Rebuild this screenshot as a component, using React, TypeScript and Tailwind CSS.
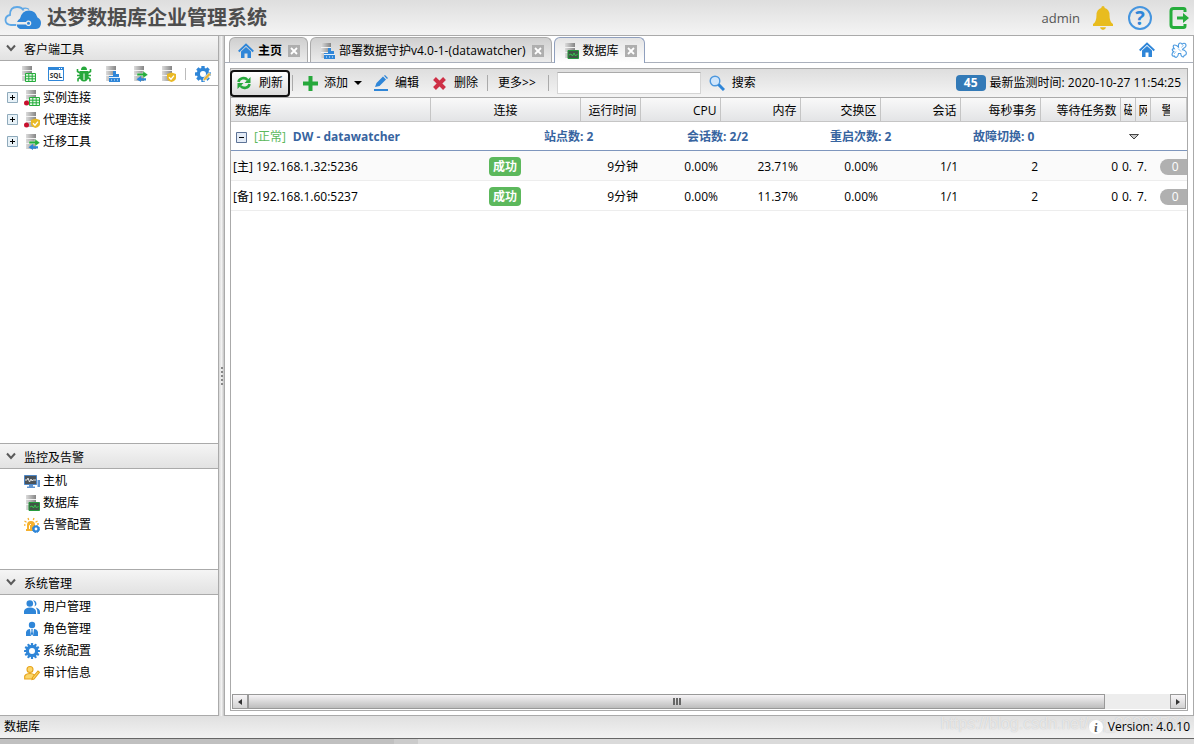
import type { ReactNode } from "react";

type Kind = "table" | "agent" | "deploy" | "transfer" | "monitor";

function ServerIcon({ kind, dot = false }: { kind: Kind; dot?: boolean }) {
  return (
    <svg width="16" height="16" viewBox="0 0 16 16" className="shrink-0" aria-hidden="true">
      <defs>
        <linearGradient id="srv" x1="0" x2="1">
          <stop offset="0" stopColor="#dcdcdc" />
          <stop offset="1" stopColor="#858585" />
        </linearGradient>
      </defs>
      <path d="M2 0h10v4H2zM2 5h10v4H2zM2 10h10v5H2z" fill="url(#srv)" />
      <path d="M2 4.500h10M2 9.500h10" stroke="#f2f2f2" />
      {kind === "table" && (
        <>
          <path d="M5.500 7.500h10v8h-10z" fill="#e6f8e8" stroke="#26ad3c" />
          <path d="M6 10.200h9.500M6 12.800h9.500M8.800 7.500v8M12.200 7.500v8" stroke="#26ad3c" />
        </>
      )}
      {kind === "agent" && (
        <>
          <path d="M11.500 6.500 16 8v4q0 2.500-4.500 4Q7 14.500 7 12V8z" fill="#e9b925" />
          <path d="m9 11.200 2 2 3-3.500" fill="none" stroke="#fff" strokeWidth="1.300" />
        </>
      )}
      {kind === "deploy" && (
        <>
          <path d="M9 5h3v3h3v3h1v5H5v-6h4z" fill="#2f86d8" />
          <path d="M5 11.500h11M7 14h1M10 14h1M13 14h1" stroke="#e5f1fc" />
        </>
      )}
      {kind === "transfer" && (
        <>
          <path d="M5 7.200h6V5l5 3.700-5 3.600v-2.500H5z" fill="#26ad3c" stroke="#fff" strokeWidth=".4" />
          <path d="M14 12.200H9V10l-4.500 3.300L9 16v-1.500h5z" fill="#2f86d8" />
        </>
      )}
      {kind === "monitor" && (
        <>
          <path d="M5 7.500h10.500v8H5z" fill="#3f5745" stroke="#269b3d" />
          <path d="m6 12 2-1 1.500 2 1.500-3 1.500 3 2-2" fill="none" stroke="#37c74f" />
        </>
      )}
      {dot && <circle cx="2.500" cy="13" r="2.500" fill="#c8102e" />}
    </svg>
  );
}

const teeth = [0, 45, 90, 135, 180, 225, 270, 315];
const fineTeeth = [0, 30, 60, 90, 120, 150, 180, 210, 240, 270, 300, 330];

function GearIcon({ pencil = false, fine = false }: { pencil?: boolean; fine?: boolean }) {
  return (
    <svg width="16" height="16" viewBox="0 0 16 16" className="shrink-0" aria-hidden="true">
      <g fill="#2f86d8">
        {(fine ? fineTeeth : teeth).map((a) => (
          <rect key={a} x={fine ? 6.9 : 6.3} y="0" width={fine ? 2.2 : 3.4} height="4" rx=".5" transform={`rotate(${a} 8 8)`} />
        ))}
      </g>
      <circle cx="8" cy="8" r="4.600" fill="none" stroke="#2f86d8" strokeWidth="3.200" />
      {pencil && <path d="m8 15 .8-3L14 6.500l2 2-5.200 5.500z" fill="#eab53a" stroke="#fff" strokeWidth=".6" />}
    </svg>
  );
}

function HomeIcon() {
  return (
    <svg width="16" height="16" viewBox="0 0 16 16" className="shrink-0" aria-hidden="true">
      <path d="m.7 8.500 7.300-7 7.300 7" fill="none" stroke="#2f86d8" strokeWidth="1.800" />
      <path d="M3 8.500 8 4l5 4.500V15H9.500v-4.500h-3V15H3z" fill="#2f86d8" />
    </svg>
  );
}

function SqlIcon() {
  return (
    <svg width="16" height="16" viewBox="0 0 16 16" aria-hidden="true">
      <path d="M.5 1.500h15v13H.5z" fill="#fff" stroke="#2f86d8" />
      <path d="M0 1h16v3H0z" fill="#2f86d8" />
      <path d="M11 2.500h1M13 2.500h1" stroke="#fff" />
      <text x="8" y="11.800" textAnchor="middle" fontSize="6.500" fontWeight="700" fontFamily="Open Sans" fill="#333">SQL</text>
    </svg>
  );
}

function BugIcon() {
  return (
    <svg width="16" height="16" viewBox="0 0 16 16" aria-hidden="true">
      <path d="M5 4a3 3.500 0 0 1 6 0zM3.500 5h9v6q-1 4.500-4.500 4.500T3.500 11z" fill="#26a83b" />
      <path d="M1.500 3v2.500L4 7M14.500 3v2.500L12 7M1 9.500h3M15 9.500h-3M4 11.500 2 13v2.500M12 11.500l2 1.500v2.500" fill="none" stroke="#26a83b" strokeWidth="1.600" />
      <path d="M8 7.500V14" stroke="#fff" />
    </svg>
  );
}

function HostIcon() {
  return (
    <svg width="16" height="16" viewBox="0 0 16 16" className="shrink-0" aria-hidden="true">
      <path d="M.5 2.500h12v9H.5z" fill="#4b5258" stroke="#4d86c6" />
      <path d="M1 7h2l1-2 1.500 4 1.500-3 1 2 1-1h3" fill="none" stroke="#e4e4e4" />
      <path d="M5 12h4v1.500h2V15H3v-1.500h2zM13.500 7H16v7h-2.500z" fill="#5d92cf" />
    </svg>
  );
}

function AlarmIcon() {
  return (
    <svg width="16" height="16" viewBox="0 0 16 16" className="shrink-0" aria-hidden="true">
      <path d="M3 12V8a4 4 0 0 1 8 0v4h1v2H2v-2z" fill="#f5b12e" />
      <path d="M5.500 12V8.500L7 7" fill="none" stroke="#fff" />
      <path d="m4 1 .7 2M10 1l-.7 2M.500 4l2 1.200M13.500 4l-2 1.200M0 8h1.500M13 7h2" stroke="#f5b12e" strokeWidth="1.300" />
      <circle cx="12" cy="12" r="2.500" fill="#fff" stroke="#2f86d8" strokeWidth="2.200" />
      <circle cx="12" cy="12" r="3.500" fill="none" stroke="#2f86d8" strokeDasharray="1.600 1.150" />
    </svg>
  );
}

function UsersIcon() {
  return (
    <svg width="16" height="16" viewBox="0 0 16 16" className="shrink-0" aria-hidden="true" fill="#2f86d8">
      <circle cx="5.800" cy="4.500" r="3.300" />
      <path d="M0 15v-3q1-3.500 6-3.500t6 3.500v3zM9 1.200a3.300 3.300 0 0 1 1.500 6.300Q12 4 9 1.200M11.800 8.500Q16 9.500 16 13v2h-2.500q.5-4-1.700-6.500" />
    </svg>
  );
}

function RoleIcon() {
  return (
    <svg width="16" height="16" viewBox="0 0 16 16" className="shrink-0" aria-hidden="true" fill="#2f86d8">
      <circle cx="8" cy="4" r="3.200" />
      <path d="M2 15v-4q1-3 4-3l1 7zM14 15v-4q-1-3-4-3l-1 7zM7 8.200h2l-.5 1.500.6 3.300L8 14.800 6.900 13l.6-3.300z" />
    </svg>
  );
}

function AuditIcon() {
  return (
    <svg width="16" height="16" viewBox="0 0 16 16" className="shrink-0" aria-hidden="true" fill="#fbd66a" stroke="#e7a41c" strokeWidth="1.100">
      <circle cx="6" cy="4.500" r="3" />
      <path d="M.7 14v-3Q2 8.500 6 8.500q3 0 4.500 1.500L9 14z" />
      <path d="m8 14.500.5-2L14 6l1.500 1.200L10 14z" />
    </svg>
  );
}

function Logo() {
  return (
    <svg width="38" height="26" viewBox="0 0 38 26" aria-hidden="true">
      <path d="M15 23.500q-2-1-2.500-4h9.500a2.800 2.800 0 1 0 0-2.500h-9Q14 14.500 16 13.500 18 5.500 25 5.500q6.500 0 8.500 7Q37 14 37 18q0 5.500-5 6H18q-2 0-3-.5" fill="#2f86d8" />
      <circle cx="24.500" cy="18.200" r="1.500" fill="#2f86d8" />
      <path d="M12 20H7q-5.500-.5-5.500-5 0-4 4.500-5 0-8 7-8 5 0 6.500 3.500" fill="none" stroke="#5fa8e6" strokeWidth="1.800" />
      <path d="M19 3.500q4-1 6 1" fill="none" stroke="#5fa8e6" strokeWidth="1.300" />
    </svg>
  );
}

function Chevron() {
  return (
    <svg width="10" height="8" viewBox="0 0 10 8" className="mb-1" aria-hidden="true">
      <path d="m1 1.500 4 4.500 4-4.500" fill="none" stroke="#5a5a5a" strokeWidth="2" />
    </svg>
  );
}

function ToggleBox({ open = false }: { open?: boolean }) {
  return (
    <button aria-label={open ? "收起" : "展开"} className="shrink-0">
      <svg width="11" height="11" viewBox="0 0 11 11" className="block">
        <path d="M.5.5h10v10H.5z" fill={open ? "#e3ebf6" : "#e8f2f8"} stroke={open ? "#5d7396" : "#8faabb"} />
        <path d={open ? "M3 5.500h5" : "M3 5.500h5M5.500 3v5"} stroke="#000" />
      </svg>
    </button>
  );
}

function SectionHeader({ title }: { title: string }) {
  return (
    <button className="flex h-[26px] w-full shrink-0 items-center gap-2 border-y border-[#aaa] bg-linear-to-b from-[#f5f5f5] to-[#e2e2e2] px-[6px] pt-1">
      <Chevron />
      <span>{title}</span>
    </button>
  );
}

function NavItem({ icon, label }: { icon: ReactNode; label: string }) {
  return (
    <li>
      <a href="#" className="flex h-[22px] items-center gap-[3px] pl-6">
        {icon}
        <span>{label}</span>
      </a>
    </li>
  );
}

function TreeItem({ icon, label }: { icon: ReactNode; label: string }) {
  return (
    <li className="flex h-[22px] items-center gap-[6px] pl-[7px]">
      <ToggleBox />
      <a href="#" className="flex items-center gap-[3px] pt-[2px]">
        {icon}
        <span>{label}</span>
      </a>
    </li>
  );
}

function Tab({ icon, label, bold = false, active = false }: { icon: ReactNode; label: string; bold?: boolean; active?: boolean }) {
  return (
    <div
      className={`flex items-center gap-1 rounded-t-md border border-b-0 pt-px pr-[7px] pl-2 ${
        active ? "-mb-px h-[26px] border-[#8f9fbd] bg-linear-to-b from-[#e4e4e4] to-white" : "h-[25px] border-[#aaa] bg-linear-to-b from-[#cfcfcf] to-[#ececec]"
      }`}
    >
      <button role="tab" aria-selected={active} className={`flex items-center gap-1 whitespace-nowrap ${bold ? "font-bold" : ""}`}>
        {icon}
        <span>{label}</span>
      </button>
      <button aria-label="关闭" className="ml-[2px] grid size-3 place-items-center bg-[#aeaeae]">
        <svg width="8" height="8" viewBox="0 0 8 8">
          <path d="m1 1 6 6M7 1 1 7" stroke="#fff" strokeWidth="1.800" />
        </svg>
      </button>
    </div>
  );
}

function Separator() {
  return <span className="h-4 w-px shrink-0 bg-[#aaa]" />;
}

const columns = [
  { title: "数据库", width: "w-[199px]", align: "text-left" },
  { title: "连接", width: "w-[150px]", align: "text-center" },
  { title: "运行时间", width: "w-[60px]", align: "text-right" },
  { title: "CPU", width: "w-20", align: "text-right" },
  { title: "内存", width: "w-20", align: "text-right" },
  { title: "交换区", width: "w-20", align: "text-right" },
  { title: "会话", width: "w-20", align: "text-right" },
  { title: "每秒事务", width: "w-20", align: "text-right" },
  { title: "等待任务数", width: "w-20", align: "text-right" },
  { title: "磁", width: "w-[15px]", align: "text-left" },
  { title: "网", width: "w-[15px]", align: "text-left" },
  { title: "警", width: "w-auto", align: "text-left" },
];

const rows = [
  { name: "[主] 192.168.1.32:5236", values: ["9分钟", "0.00%", "23.71%", "0.00%", "1/1", "2", "0"] },
  { name: "[备] 192.168.1.60:5237", values: ["9分钟", "0.00%", "11.37%", "0.00%", "1/1", "2", "0"] },
];

const summary = ["站点数: 2", "会话数: 2/2", "重启次数: 2", "故障切换: 0"];

function Grid() {
  return (
    <table className="w-full table-fixed border-collapse">
      <colgroup>
        {columns.map((c) => <col key={c.title} className={c.width} />)}
      </colgroup>
      <thead>
        <tr className="h-[23px] bg-linear-to-b from-[#f9f9f9] to-[#e3e4e6]">
          {columns.map((c, i) => (
            <th key={c.title} className={`overflow-hidden border-r border-b border-[#c5c5c5] pt-[3px] font-normal whitespace-nowrap ${i > 8 ? "px-[3px]" : "pr-[3px] pl-1"} ${c.align}`}>
              {i > 8 ? <span className={`block w-2 overflow-hidden ${i === 11 ? "ml-2" : ""}`}>{c.title}</span> : c.title}
            </th>
          ))}
        </tr>
      </thead>
      <tbody>
        <tr className="h-[29px] border-b border-[#7e96bd] font-bold text-[#3764a0]">
          <td colSpan={12}>
            <div className="flex items-center pt-[3px] pl-[5px]">
              <div className="flex w-[308px] shrink-0 items-center gap-[7px]">
                <ToggleBox open />
                <span className="font-normal text-[#5cb85c]">[正常]</span>
                <span>DW - datawatcher</span>
              </div>
              {summary.map((s) => <span key={s} className="w-[143px] shrink-0">{s}</span>)}
              <button aria-label="更多" className="ml-3">
                <svg width="12" height="8" viewBox="0 0 12 8" className="block">
                  <path d="M1.500 1.500h9L6 6z" fill="#c8c8c8" stroke="#444" />
                </svg>
              </button>
            </div>
          </td>
        </tr>
        {rows.map((r) => (
          <tr key={r.name} className="h-[30px] border-b border-[#ededed] odd:bg-white even:bg-[#fafafa] [&>td]:pt-[3px]">
            <td className="pl-[2px]">{r.name}</td>
            <td className="text-center">
              <span className="inline-block rounded-[4px] bg-[#5cb85c] px-1 leading-[19px] font-bold text-white">成功</span>
            </td>
            {r.values.map((v, i) => <td key={i} className="pr-[2px] text-right">{v}</td>)}
            <td className="overflow-hidden pl-[2px] whitespace-nowrap">0.</td>
            <td className="overflow-hidden pl-[2px] whitespace-nowrap">7.</td>
            <td className="overflow-hidden pl-[10px]">
              <span className="flex h-4 items-center justify-center rounded-l-full bg-[#b0b0b0] pl-1 text-white">0</span>
            </td>
          </tr>
        ))}
      </tbody>
    </table>
  );
}

function Sidebar() {
  return (
    <aside className="flex w-[219px] shrink-0 flex-col border-r border-b border-[#aaa] bg-white">
      <SectionHeader title="客户端工具" />
      <div className="flex h-[25px] shrink-0 items-center gap-3 border-b border-[#aaa] pt-px pl-5">
        <button aria-label="实例"><ServerIcon kind="table" /></button>
        <button aria-label="SQL"><SqlIcon /></button>
        <button aria-label="调试"><BugIcon /></button>
        <button aria-label="部署"><ServerIcon kind="deploy" /></button>
        <button aria-label="迁移"><ServerIcon kind="transfer" /></button>
        <button aria-label="代理"><ServerIcon kind="agent" /></button>
        <span className="-mx-[3px] h-3 w-px bg-[#bbb]" />
        <button aria-label="设置"><GearIcon pencil /></button>
      </div>
      <ul className="flex-1">
        <TreeItem icon={<ServerIcon kind="table" dot />} label="实例连接" />
        <TreeItem icon={<ServerIcon kind="agent" dot />} label="代理连接" />
        <TreeItem icon={<ServerIcon kind="transfer" />} label="迁移工具" />
      </ul>
      <SectionHeader title="监控及告警" />
      <ul className="h-[100px] shrink-0 pt-px">
        <NavItem icon={<HostIcon />} label="主机" />
        <NavItem icon={<ServerIcon kind="monitor" />} label="数据库" />
        <NavItem icon={<AlarmIcon />} label="告警配置" />
      </ul>
      <SectionHeader title="系统管理" />
      <ul className="h-[120px] shrink-0 pt-px">
        <NavItem icon={<UsersIcon />} label="用户管理" />
        <NavItem icon={<RoleIcon />} label="角色管理" />
        <NavItem icon={<GearIcon fine />} label="系统配置" />
        <NavItem icon={<AuditIcon />} label="审计信息" />
      </ul>
    </aside>
  );
}

function Toolbar() {
  return (
    <div className="flex h-[29px] shrink-0 items-center border-b border-[#aaa] bg-linear-to-b from-[#dedede] to-[#f4f4f4] pr-[6px] whitespace-nowrap">
      <button className="-ml-px flex h-[27px] items-center gap-2 rounded-[4px] border-2 border-[#111] bg-linear-to-b from-white to-[#dcdcdc] px-[5px]">
        <svg width="14" height="14" viewBox="0 0 14 14">
          <path d="M1.500 6a5 4.500 0 0 1 9-2M12.500 8a5 4.500 0 0 1-9 2" fill="none" stroke="#26a83b" strokeWidth="2.600" />
          <path d="M13.500 1v6H7.500zM.5 13V7h6z" fill="#26a83b" />
        </svg>
        刷新
      </button>
      <span className="ml-[2px] flex"><Separator /></span>
      <button className="ml-[10px] flex items-center gap-[6px]">
        <svg width="15" height="15" viewBox="0 0 15 15"><path d="M7.500 0v15M0 7.500h15" stroke="#26a83b" strokeWidth="4" /></svg>
        添加
        <svg width="8" height="4" viewBox="0 0 8 4"><path d="M0 0h8L4 4z" /></svg>
      </button>
      <button className="ml-3 flex items-center gap-[6px]">
        <svg width="15" height="16" viewBox="0 0 15 16">
          <path d="m1 12 1.500-4L9 1.500l3 3L5.500 11zM10 .8l1-.8 3 3-1 1zM0 14h14v2H0z" fill="#2f86d8" />
        </svg>
        编辑
      </button>
      <button className="ml-[14px] flex items-center gap-2">
        <svg width="13" height="13" viewBox="0 0 13 13"><path d="m1.500 1.500 10 10M11.500 1.500l-10 10" stroke="#ce3046" strokeWidth="4" /></svg>
        删除
      </button>
      <span className="ml-[9px] flex"><Separator /></span>
      <button className="ml-[10px]">更多&gt;&gt;</button>
      <span className="ml-3 flex"><Separator /></span>
      <input aria-label="搜索内容" className="ml-2 h-[22px] w-36 shrink-0 border border-[#d5d5d5] border-t-[#aaa] bg-white px-1" />
      <button className="ml-2 flex items-center gap-[7px]">
        <svg width="16" height="16" viewBox="0 0 16 16">
          <circle cx="6" cy="6" r="4.800" fill="#cfe5fb" stroke="#4c97dd" strokeWidth="1.400" />
          <path d="m9.500 9.500 5.500 5.500" stroke="#2f86d8" strokeWidth="3" />
        </svg>
        搜索
      </button>
      <span className="ml-auto rounded-[4px] bg-[#337ab7] px-2 leading-4 font-bold text-white">45</span>
      <span className="ml-1">最新监测时间: 2020-10-27 11:54:25</span>
    </div>
  );
}

function ScrollBar() {
  const box = "grid w-4 shrink-0 place-items-center border border-[#999] bg-linear-to-b from-[#f8f6f8] to-[#d2d2d2]";
  return (
    <div className="flex h-[15px] shrink-0 bg-[#ededed]">
      <button aria-label="向左" className={box}>
        <svg width="4" height="6" viewBox="0 0 4 6"><path d="M4 0v6L0 3z" fill="#333" /></svg>
      </button>
      <div className="flex-1">
        <div className="flex h-full w-[93%] items-center justify-center gap-px border border-[#999] bg-linear-to-b from-[#f6f4f6] to-[#bdbdbd]">
          <span className="h-[7px] w-[2px] bg-[#666]" />
          <span className="h-[7px] w-[2px] bg-[#666]" />
          <span className="h-[7px] w-[2px] bg-[#666]" />
        </div>
      </div>
      <button aria-label="向右" className={box}>
        <svg width="4" height="6" viewBox="0 0 4 6"><path d="M0 0v6l4-3z" fill="#333" /></svg>
      </button>
    </div>
  );
}

export default function App() {
  return (
    <div className="flex h-screen flex-col overflow-hidden bg-[#ececec] font-['Open_Sans','Noto_Sans_CJK_SC',sans-serif] text-xs leading-4 text-black">
      <header className="flex h-[35px] shrink-0 items-center bg-linear-to-b from-[#dedede] to-[#f4f4f4] pr-1 pl-[4px]">
        <Logo />
        <h1 className="ml-[5px] text-xl leading-7 font-bold text-[#4d4d4d]">达梦数据库企业管理系统</h1>
        <span className="ml-auto text-[13px] text-[#555]">admin</span>
        <button aria-label="告警" className="ml-3">
          <svg width="22" height="24" viewBox="0 0 22 24">
            <path d="M11 0q1.500 0 1.800 2Q17.500 3.500 17.500 9q0 7 3.500 9v2H1v-2q3.500-2 3.500-9 0-5.500 4.700-7Q9.500 0 11 0M8 21.300h6Q13.500 24 11 24t-3-2.700" fill="#e8bc1f" />
          </svg>
        </button>
        <button aria-label="帮助" className="ml-[14px] grid size-6 place-items-center rounded-full border-2 border-[#4595df] text-xl leading-5 font-bold text-[#2f86d8]">?</button>
        <button aria-label="退出" className="ml-[17px]">
          <svg width="21" height="22" viewBox="0 0 21 22">
            <path d="M16 5V3q0-1.500-1.500-1.500h-10Q2 1.500 2 4v14q0 2.500 2.500 2.500h10q1.500 0 1.500-1.500v-2" fill="none" stroke="#26ad3c" strokeWidth="3" />
            <path d="M8 9.500h6V6l6 5-6 5v-3.500H8z" fill="#26ad3c" />
          </svg>
        </button>
      </header>

      <div className="flex min-h-0 flex-1">
        <Sidebar />
        <div className="flex w-[5px] shrink-0 flex-col items-center justify-center gap-[2px] border-t border-[#aaa] bg-linear-to-r from-[#d8d8d8] via-[#f2f2f2] to-[#c4c4c4]">
          {[0, 1, 2, 3, 4].map((n) => <span key={n} className="size-[2px] bg-[#888]" />)}
        </div>
        <main className="flex min-w-0 flex-1 flex-col border border-[#aaa] bg-white">
          <div className="flex h-[27px] shrink-0 items-end gap-[2px] border-b border-[#aab0bc] pr-[6px] pl-1">
            <Tab icon={<HomeIcon />} label="主页" bold />
            <Tab icon={<ServerIcon kind="deploy" />} label="部署数据守护v4.0-1-(datawatcher)" />
            <Tab icon={<ServerIcon kind="monitor" />} label="数据库" active />
            <div className="ml-auto flex h-full items-center gap-4 pt-[2px]">
              <button aria-label="主页"><HomeIcon /></button>
              <button aria-label="关闭全部">
                <svg width="16" height="16" viewBox="0 0 16 16">
                  <path d="M7.500 5Q7 1 9.500 1q1.200 0 1.700 1.200Q12.500.8 14 1.500q1.500 1 .7 3-.7 1.300-2.500 2l-.7 1.300q2 .2 3.300 1.700 1.200 2-.3 3.500l-1.200.3-.8 1.700q-2.500 0-2.800-3.500L7.500 11.500q-.3 3-2 3.800-1.800.2-2.200-1.300-2 .5-2.300-1.300-.2-1.500 1.700-3.200Q1 9 1.300 7.300 2 6.500 3.200 6.700 1.500 4.500 2.800 3.200 4.500 2.300 7.500 5z" fill="#fff" stroke="#4b9ae0" strokeWidth="1.100" />
                  <path d="m7 6.500 3 3M10.500 5.500l2-2.500M5 9.500l-2 2.500" stroke="#8fc1ee" fill="none" />
                </svg>
              </button>
            </div>
          </div>
          <div className="flex min-h-0 flex-1 flex-col px-[5px] pt-[5px] pb-1">
            <section className="flex min-h-0 flex-1 flex-col border border-[#aaa]">
              <Toolbar />
              <div className="min-h-0 flex-1 overflow-hidden"><Grid /></div>
              <div className="p-px"><ScrollBar /></div>
            </section>
          </div>
        </main>
      </div>

      <footer className="relative flex h-[23px] shrink-0 items-center border-b border-[#666] bg-linear-to-b from-[#e0e0e0] to-[#f2f2f2] px-1">
        <span className="absolute right-2 bottom-1 font-['Liberation_Sans'] text-base leading-5 text-white/60 [text-shadow:0_0_1px_#bbb]">https://blog.csdn.net/qq_33309566</span>
        <span>数据库</span>
        <span className="relative ml-auto grid size-[14px] place-items-center rounded-full bg-white font-serif font-bold text-[#555] italic">i</span>
        <span className="relative ml-[5px]">Version: 4.0.10</span>
      </footer>
      <div className="flex h-[5px] shrink-0">
        <span className="w-[33%] bg-[#c0c0c0]" />
        <span className="w-[2%] bg-[#cbcbcb]" />
        <span className="flex-1 bg-[#dadada]" />
      </div>
    </div>
  );
}
